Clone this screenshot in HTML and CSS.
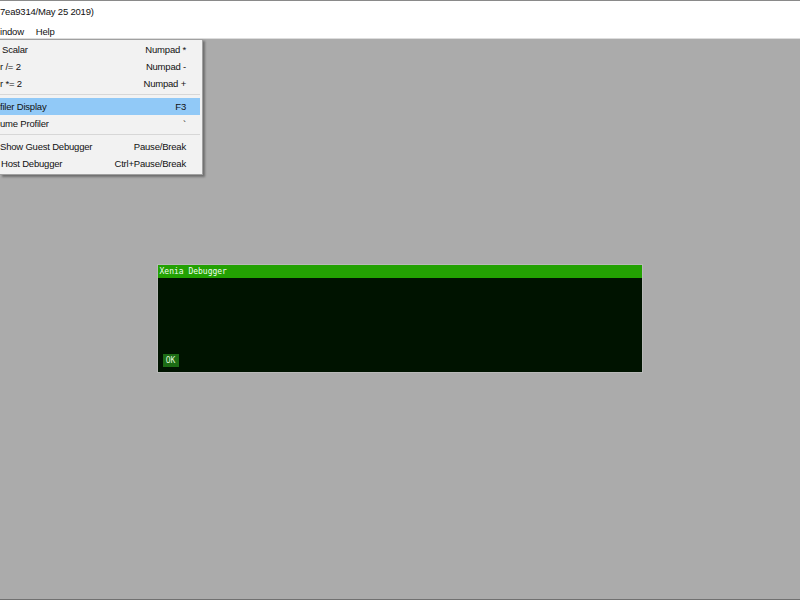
FILE: index.html
```html
<!DOCTYPE html>
<html>
<head>
<meta charset="utf-8">
<link rel="stylesheet" href="styles.css">
</head>
<body>
<div class="app">
  <header class="chrome">
    <div class="titlebar">7ea9314/May 25 2019)</div>
    <nav class="menubar">
      <span class="menu-item first">indow</span>
      <span class="menu-item">Help</span>
    </nav>
  </header>
  <main class="canvas">
    <section class="dialog">
      <div class="dialog-title">Xenia Debugger</div>
      <div class="dialog-body">
        <button class="ok">OK</button>
      </div>
    </section>
  </main>
  <div class="dropdown">
    <div class="row"><span class="label lead">Scalar</span><span class="key">Numpad *</span></div>
    <div class="row"><span class="label">r /= 2</span><span class="key">Numpad -</span></div>
    <div class="row"><span class="label">r *= 2</span><span class="key">Numpad +</span></div>
    <div class="sep"></div>
    <div class="row active"><span class="label">filer Display</span><span class="key">F3</span></div>
    <div class="row"><span class="label">ume Profiler</span><span class="key">`</span></div>
    <div class="sep"></div>
    <div class="row"><span class="label">Show Guest Debugger</span><span class="key">Pause/Break</span></div>
    <div class="row"><span class="label host">Host Debugger</span><span class="key">Ctrl+Pause/Break</span></div>
  </div>
</div>
</body>
</html>
```

FILE: styles.css
```css
* { box-sizing: border-box; }
html, body { margin: 0; padding: 0; }
body {
  width: 800px;
  height: 600px;
  overflow: hidden;
  font-family: "Liberation Sans", Arial, sans-serif;
  font-size: 9.5px;
  letter-spacing: -0.2px;
  color: #1a1a1a;
  white-space: nowrap;
}
.app {
  position: relative;
  width: 800px;
  height: 600px;
  display: flex;
  flex-direction: column;
}
.chrome {
  background: #ffffff;
  border-top: 1px solid #8a8a8a;
  border-bottom: 1px solid #dcdcdc;
}
.titlebar {
  height: 21px;
  line-height: 22px;
  color: #111;
}
.menubar {
  height: 16px;
  display: flex;
  align-items: center;
  gap: 12px;
  line-height: 16px;
  padding-top: 3px;
}
.menu-item { color: #111; }
.canvas {
  flex: 1;
  background: #ababab;
  border-bottom: 1px solid #707070;
  display: flex;
  align-items: center;
  justify-content: center;
}
.dialog {
  width: 486px;
  height: 109px;
  border: 1px solid #b9b9b9;
  display: flex;
  flex-direction: column;
  margin-left: -1px;
  margin-top: -1px;
  letter-spacing: 0;
}
.dialog-title {
  height: 13px;
  background: #23a102;
  color: #f0fff0;
  font-family: "DejaVu Sans Mono", "Liberation Mono", monospace;
  font-size: 8px;
  line-height: 13px;
  padding-left: 2px;
}
.dialog-body {
  flex: 1;
  background: #001300;
  display: flex;
  align-items: flex-end;
  padding: 0 0 5px 5px;
}
.ok {
  border: 0;
  margin: 0;
  width: 16px;
  height: 13px;
  padding: 0;
  background: #1c6b14;
  color: #dff5d8;
  font-family: "DejaVu Sans Mono", "Liberation Mono", monospace;
  font-size: 8px;
  line-height: 13px;
  text-align: center;
}
.dropdown {
  position: absolute;
  left: 0;
  top: 39px;
  width: 203px;
  background: #f2f2f2;
  border: 1px solid #a0a0a0;
  border-left: 0;
  padding: 1px 2px 2px 0;
  box-shadow: 2px 2px 2px rgba(0,0,0,0.35);
}
.row {
  height: 17px;
  display: flex;
  align-items: center;
  justify-content: space-between;
  padding-right: 14px;
  color: #111;
}
.row.active { background: #91c9f7; }
.label.lead { padding-left: 2px; }
.label.host { padding-left: 1px; }
.key { color: #111; }
.sep {
  height: 6px;
  position: relative;
}
.sep::after {
  content: "";
  position: absolute;
  left: 0;
  right: 0;
  top: 2px;
  border-top: 1px solid #d7d7d7;
}
```
